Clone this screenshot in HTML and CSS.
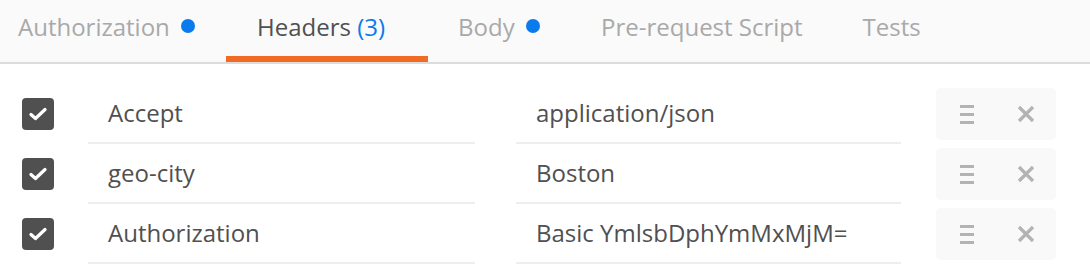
FILE: index.html
```html
<!DOCTYPE html>
<html lang="en">
<head>
<meta charset="utf-8">
<title>Headers</title>
<link rel="stylesheet" href="styles.css">
</head>
<body>
<div class="tabs">
  <div class="tab tab-first tab-dot">Authorization <span class="dot"></span></div>
  <div class="tab tab-active">Headers <span class="count">(3)</span></div>
  <div class="tab tab-dot">Body <span class="dot"></span></div>
  <div class="tab">Pre-request Script</div>
  <div class="tab">Tests</div>
</div>
<div class="rows">
  <div class="row">
    <div class="check"><svg width="18" height="14" viewBox="0 0 18 14"><path d="M2 7.5 L6.5 11.5 L16 2.5" fill="none" stroke="#fff" stroke-width="3.2" stroke-linecap="round" stroke-linejoin="round"/></svg></div>
    <div class="cell key">Accept</div>
    <div class="cell val">application/json</div>
    <div class="actions">
      <svg class="menu" width="14" height="19" viewBox="0 0 14 19"><rect x="0" y="0" width="14" height="3" fill="#b3b3b3"/><rect x="0" y="8" width="14" height="3" fill="#b3b3b3"/><rect x="0" y="16" width="14" height="3" fill="#b3b3b3"/></svg>
      <svg class="close" width="18" height="18" viewBox="0 0 18 18"><path d="M2 2 L16 16 M16 2 L2 16" stroke="#b3b3b3" stroke-width="3.2"/></svg>
    </div>
  </div>
  <div class="row">
    <div class="check"><svg width="18" height="14" viewBox="0 0 18 14"><path d="M2 7.5 L6.5 11.5 L16 2.5" fill="none" stroke="#fff" stroke-width="3.2" stroke-linecap="round" stroke-linejoin="round"/></svg></div>
    <div class="cell key">geo-city</div>
    <div class="cell val">Boston</div>
    <div class="actions">
      <svg class="menu" width="14" height="19" viewBox="0 0 14 19"><rect x="0" y="0" width="14" height="3" fill="#b3b3b3"/><rect x="0" y="8" width="14" height="3" fill="#b3b3b3"/><rect x="0" y="16" width="14" height="3" fill="#b3b3b3"/></svg>
      <svg class="close" width="18" height="18" viewBox="0 0 18 18"><path d="M2 2 L16 16 M16 2 L2 16" stroke="#b3b3b3" stroke-width="3.2"/></svg>
    </div>
  </div>
  <div class="row">
    <div class="check"><svg width="18" height="14" viewBox="0 0 18 14"><path d="M2 7.5 L6.5 11.5 L16 2.5" fill="none" stroke="#fff" stroke-width="3.2" stroke-linecap="round" stroke-linejoin="round"/></svg></div>
    <div class="cell key">Authorization</div>
    <div class="cell val">Basic YmlsbDphYmMxMjM=</div>
    <div class="actions">
      <svg class="menu" width="14" height="19" viewBox="0 0 14 19"><rect x="0" y="0" width="14" height="3" fill="#b3b3b3"/><rect x="0" y="8" width="14" height="3" fill="#b3b3b3"/><rect x="0" y="16" width="14" height="3" fill="#b3b3b3"/></svg>
      <svg class="close" width="18" height="18" viewBox="0 0 18 18"><path d="M2 2 L16 16 M16 2 L2 16" stroke="#b3b3b3" stroke-width="3.2"/></svg>
    </div>
  </div>
</div>
</body>
</html>
```
FILE: styles.css
```css
* { box-sizing: border-box; }
html, body { margin: 0; padding: 0; background: #fff; }
body {
  font-family: "Open Sans", "Noto Sans", sans-serif;
  font-size: 24px;
  color: #505050;
}
.tabs {
  display: flex;
  height: 64px;
  background: #fafafa;
  border-bottom: 2px solid #dcdcdc;
}
.tab {
  display: flex;
  align-items: center;
  height: 62px;
  padding: 0 30px 4px;
  color: #a9a9a9;
  white-space: pre;
  border-bottom: 6px solid transparent;
}
.tab-dot { padding-right: 31px; }
.tab-first { padding-left: 18px; }
.tab-active {
  color: #505050;
  border-bottom-color: #f26b24;
  padding-left: 31px;
  padding-right: 43px;
}
.count { color: #097bed; }
.dot {
  display: inline-block;
  width: 14px;
  height: 14px;
  border-radius: 50%;
  background: #097bed;
  margin-left: 5px;
}
.rows { padding-top: 20px; }
.row {
  display: flex;
  align-items: center;
  height: 60px;
}
.check {
  width: 32px;
  height: 32px;
  margin-left: 22px;
  margin-right: 34px;
  border-radius: 4px;
  background: #505050;
  display: flex;
  align-items: center;
  justify-content: center;
}
.cell {
  height: 60px;
  display: flex;
  align-items: center;
  padding-left: 20px;
  padding-bottom: 1px;
  border-bottom: 2px solid #eeeeee;
}
.key { width: 387px; margin-right: 41px; }
.val { width: 385px; margin-right: 35px; }
.actions {
  width: 120px;
  height: 52px;
  background: #f9f9f9;
  border-radius: 5px;
  display: flex;
  align-items: center;
  padding-left: 24px;
}
.close { margin-left: 43px; }
```
